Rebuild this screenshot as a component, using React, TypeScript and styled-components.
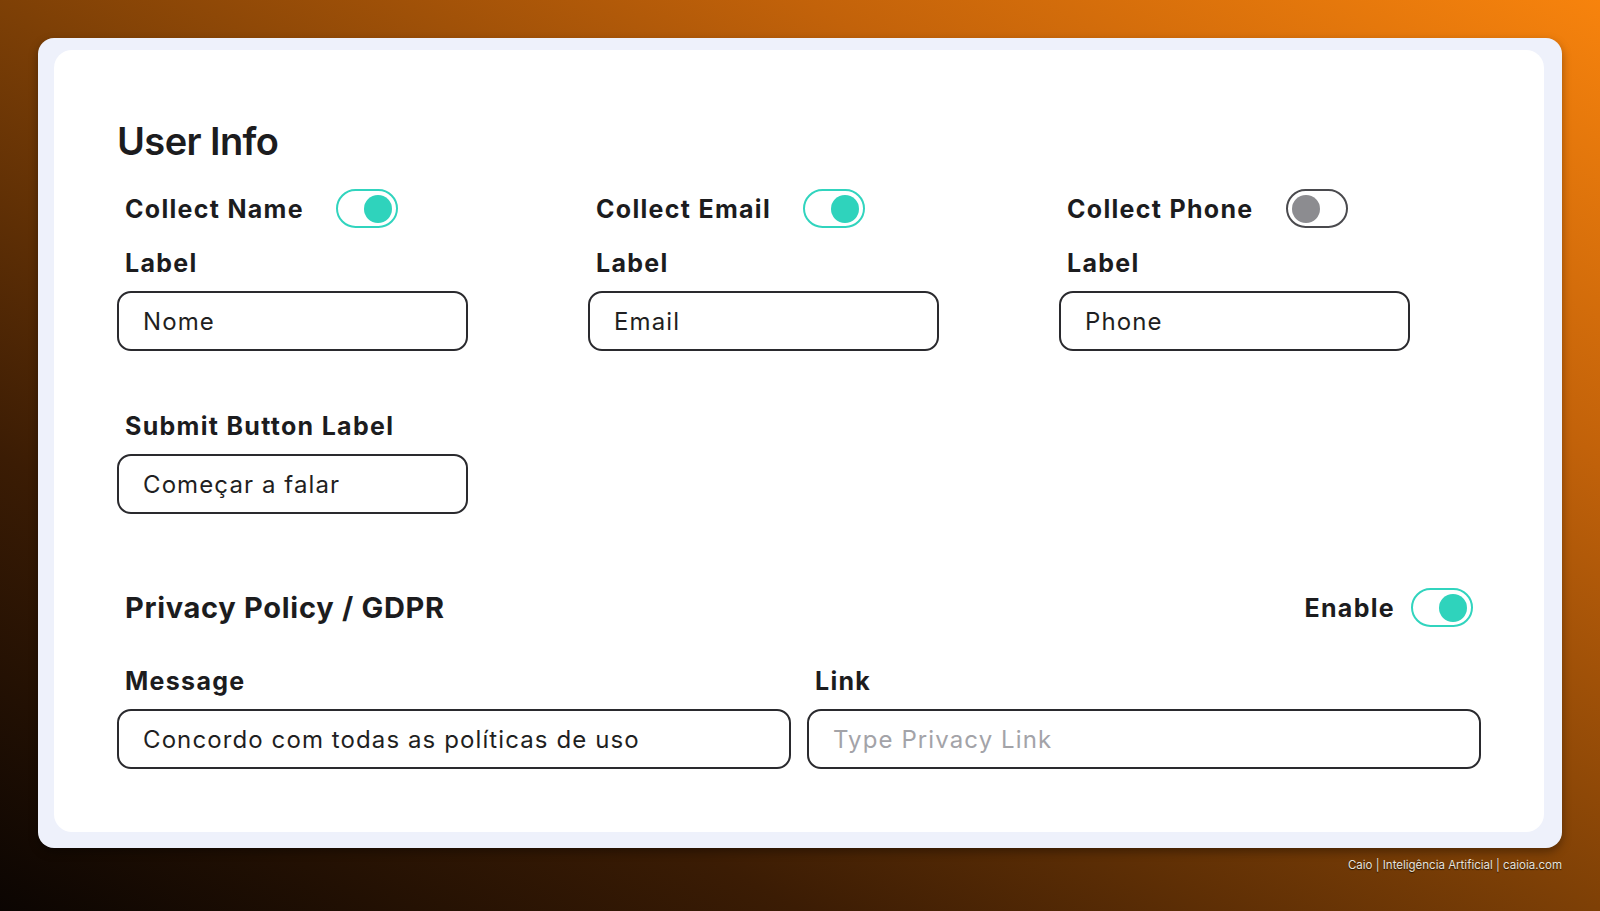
import React from "react";
import styled, { createGlobalStyle } from "styled-components";

const GlobalStyle = createGlobalStyle`
  html, body {
    margin: 0;
    padding: 0;
  }
  body {
    font-family: Inter, "Noto Sans", "Liberation Sans", sans-serif;
    color: #1c1c1e;
  }
`;

const Page = styled.div`
  width: 1600px;
  height: 911px;
  box-sizing: border-box;
  padding: 38px 38px 0;
  display: flex;
  flex-direction: column;
  background: linear-gradient(to top right, #0b0502 0%, #3b1c04 25%, #7e4006 50%, #c2620a 75%, #f7830d 100%);
  overflow: hidden;
`;

const Frame = styled.div`
  background: #eef1fb;
  border-radius: 16px;
  padding: 12px 18px 16px 16px;
  box-shadow: 0 4px 10px rgba(0, 0, 0, 0.35);
`;

const Card = styled.div`
  background: #ffffff;
  border-radius: 18px;
  padding: 68px 63px 63px;
`;

const Title = styled.h1`
  margin: 0 0 25px;
  font-size: 38px;
  line-height: 46px;
  font-weight: 600;
  letter-spacing: -0.6px;
  color: #1c1c1e;
`;

const Columns = styled.div`
  display: grid;
  grid-template-columns: repeat(3, 351px);
  column-gap: 120px;
`;

const Field = styled.div`
  display: flex;
  flex-direction: column;
`;

const ToggleRow = styled.div<{ $gap?: number }>`
  display: flex;
  align-items: center;
  gap: ${(p) => p.$gap ?? 32}px;
  padding-left: 8px;
`;

const ToggleText = styled.span`
  font-size: 25px;
  line-height: 30px;
  font-weight: 700;
  letter-spacing: 1.3px;
`;

const FieldLabel = styled.label<{ $top?: number }>`
  display: block;
  margin: ${(p) => p.$top ?? 0}px 0 13px 8px;
  font-size: 25px;
  line-height: 30px;
  font-weight: 700;
  letter-spacing: 1.3px;
`;

const TextInput = styled.input`
  box-sizing: border-box;
  width: 100%;
  height: 60px;
  padding: 0 24px;
  border: 2px solid #2a2a2e;
  border-radius: 14px;
  background: #fff;
  font-family: inherit;
  font-size: 24px;
  letter-spacing: 1.1px;
  color: #1f1f22;
  outline: none;

  &::placeholder {
    color: #a3a3a8;
  }
`;

const Track = styled.button<{ $on: boolean }>`
  box-sizing: border-box;
  width: 62px;
  height: 39px;
  padding: 0 4px;
  border: 2px solid ${(p) => (p.$on ? "#31d4be" : "#4a4a4e")};
  border-radius: 20px;
  background: #fff;
  display: flex;
  align-items: center;
  justify-content: ${(p) => (p.$on ? "flex-end" : "flex-start")};
  cursor: pointer;
`;

const Knob = styled.span<{ $on: boolean }>`
  width: 28px;
  height: 28px;
  border-radius: 50%;
  background: ${(p) => (p.$on ? "#2fd3bc" : "#8c8c90")};
`;

const SubmitBlock = styled.div`
  width: 351px;
  margin-top: 60px;
`;

const PrivacyHead = styled.div`
  display: flex;
  align-items: center;
  justify-content: space-between;
  margin-top: 74px;
  padding: 0 8px;
`;

const SectionTitle = styled.h2`
  margin: 0;
  font-size: 29px;
  line-height: 34px;
  font-weight: 700;
  letter-spacing: 0.7px;
`;

const TwoCols = styled.div`
  display: grid;
  grid-template-columns: 1fr 1fr;
  column-gap: 16px;
  margin-top: 39px;
`;

const Credit = styled.div`
  margin-top: 9px;
  text-align: right;
  font-size: 11.5px;
  line-height: 16px;
  color: #e6e2dd;
  text-shadow: 0 1px 1px rgba(0, 0, 0, 0.7);
`;

const Toggle = ({ on }: { on: boolean }) => (
  <Track $on={on} type="button" role="switch" aria-checked={on}>
    <Knob $on={on} />
  </Track>
);

const collectFields = [
  { title: "Collect Name", value: "Nome", on: true },
  { title: "Collect Email", value: "Email", on: true },
  { title: "Collect Phone", value: "Phone", on: false },
];

export default function App() {
  return (
    <>
      <GlobalStyle />
      <Page>
        <Frame>
          <Card>
            <Title>User Info</Title>
            <Columns>
              {collectFields.map((f) => (
                <Field key={f.title}>
                  <ToggleRow>
                    <ToggleText>{f.title}</ToggleText>
                    <Toggle on={f.on} />
                  </ToggleRow>
                  <FieldLabel $top={20}>Label</FieldLabel>
                  <TextInput defaultValue={f.value} />
                </Field>
              ))}
            </Columns>

            <SubmitBlock>
              <FieldLabel>Submit Button Label</FieldLabel>
              <TextInput defaultValue="Começar a falar" />
            </SubmitBlock>

            <PrivacyHead>
              <SectionTitle>Privacy Policy / GDPR</SectionTitle>
              <ToggleRow $gap={16}>
                <ToggleText>Enable</ToggleText>
                <Toggle on />
              </ToggleRow>
            </PrivacyHead>

            <TwoCols>
              <Field>
                <FieldLabel>Message</FieldLabel>
                <TextInput defaultValue="Concordo com todas as políticas de uso" />
              </Field>
              <Field>
                <FieldLabel>Link</FieldLabel>
                <TextInput placeholder="Type Privacy Link" />
              </Field>
            </TwoCols>
          </Card>
        </Frame>
        <Credit>Caio | Inteligência Artificial | caioia.com</Credit>
      </Page>
    </>
  );
}
